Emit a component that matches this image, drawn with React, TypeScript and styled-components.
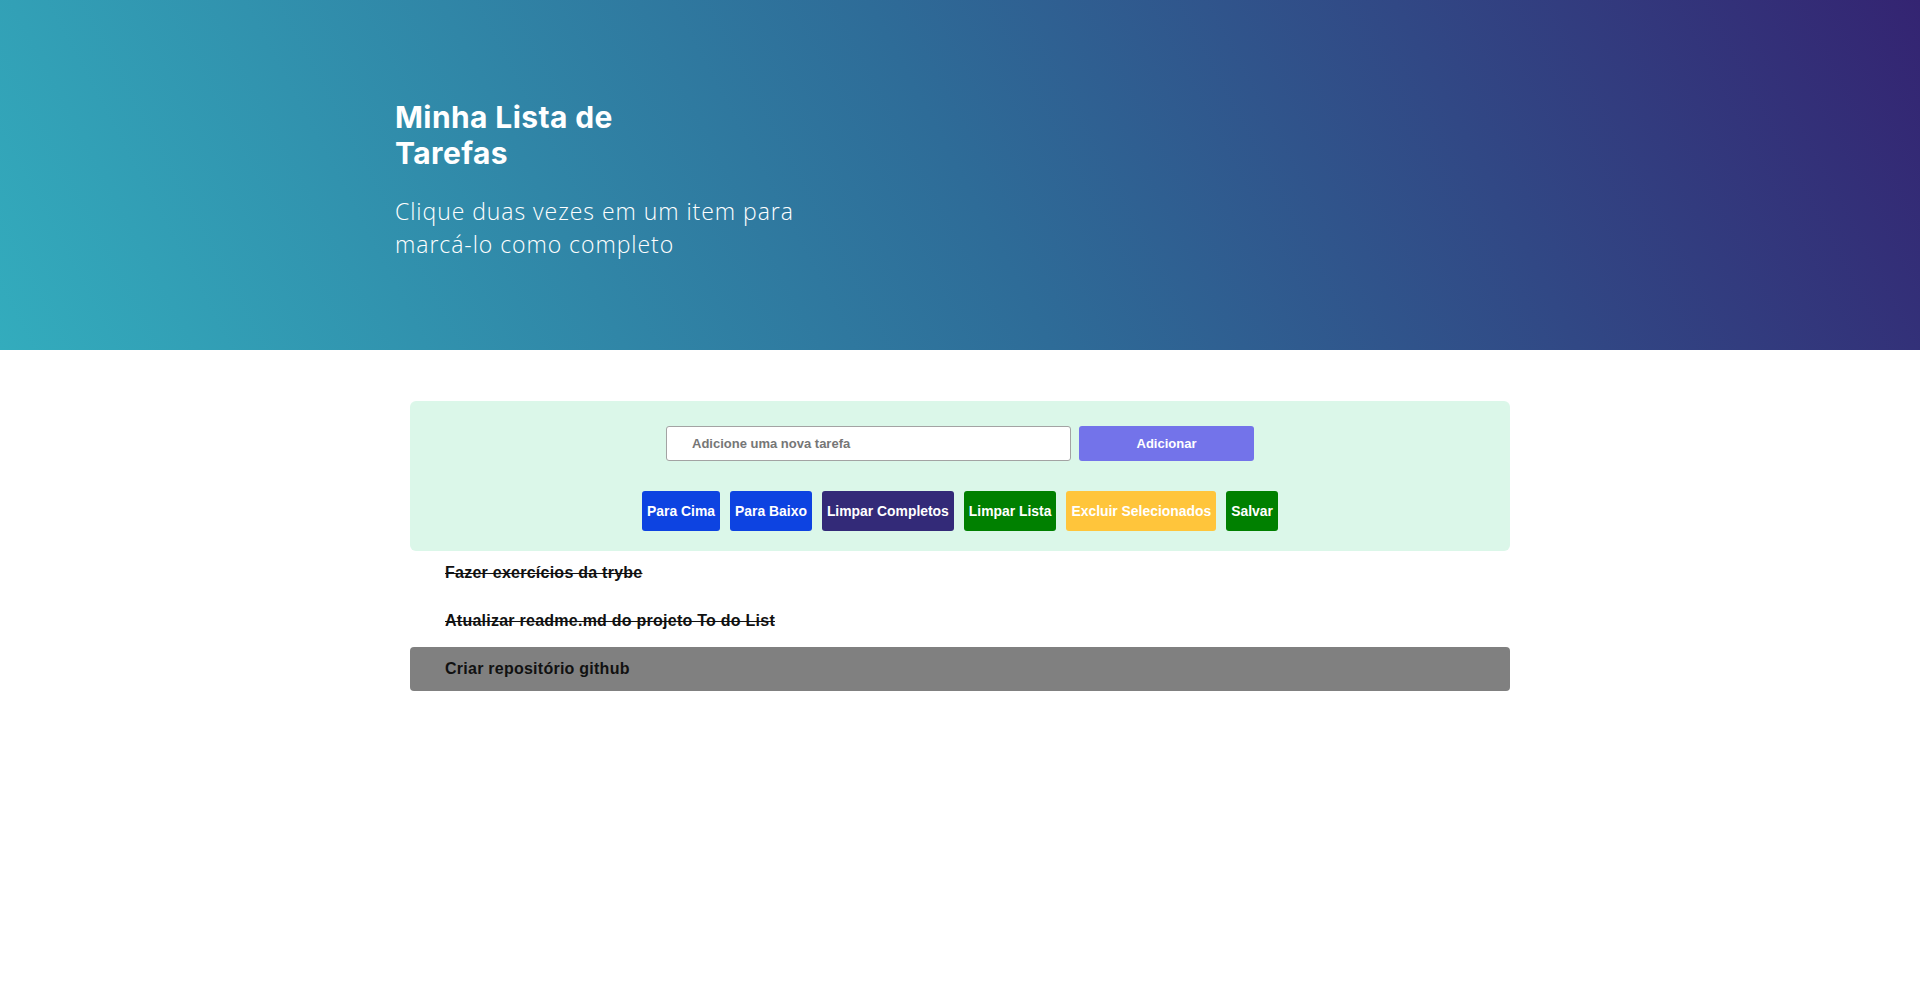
import React from "react";
import styled, { createGlobalStyle } from "styled-components";

const GlobalStyle = createGlobalStyle`
  html, body {
    margin: 0;
    padding: 0;
    background: #ffffff;
  }
  * { box-sizing: border-box; }
`;

const Page = styled.div`
  min-height: 994px;
  background: #fff;
  font-family: Inter, "Liberation Sans", sans-serif;
`;

const Header = styled.header`
  height: 350px;
  background: linear-gradient(62deg, #33acbd 0%, #2e6c98 50%, #342472 100%);
  padding-top: 99px;
`;

const HeaderInner = styled.div`
  width: 1130px;
  margin: 0 auto;
`;

const Title = styled.h1`
  margin: 0;
  width: 260px;
  color: #ffffff;
  font-family: Inter, "Liberation Sans", sans-serif;
  font-weight: 700;
  font-size: 30px;
  letter-spacing: 0.4px;
  line-height: 36px;
`;

const Subtitle = styled.p`
  margin: 24px 0 0;
  width: 440px;
  color: #ffffff;
  font-family: "Open Sans", "Liberation Sans", sans-serif;
  font-weight: 300;
  font-size: 23px;
  letter-spacing: 0.95px;
  line-height: 33px;
`;

const Main = styled.main`
  width: 1100px;
  margin: 51px auto 0;
`;

const Panel = styled.section`
  background: #dbf7e9;
  border-radius: 6px;
  height: 150px;
  padding-top: 25px;
  display: flex;
  flex-direction: column;
  align-items: center;
  gap: 30px;
`;

const InputRow = styled.div`
  display: flex;
  gap: 8px;
`;

const TaskInput = styled.input`
  width: 405px;
  height: 35px;
  border: 1px solid #a3a3a3;
  border-radius: 3px;
  padding: 0 0 0 25px;
  background: #fff;
  font-family: "Liberation Sans", Arial, sans-serif;
  font-weight: 700;
  font-size: 13px;
  color: #333;
  outline: none;
  &::placeholder {
    color: #767676;
  }
`;

const AddButton = styled.button`
  width: 175px;
  height: 35px;
  border: none;
  border-radius: 3px;
  background: #7373ea;
  color: #ffffff;
  font-family: "Liberation Sans", Arial, sans-serif;
  font-weight: 700;
  font-size: 13px;
  cursor: pointer;
`;

const ButtonRow = styled.div`
  display: flex;
  gap: 10px;
`;

const ActionButton = styled.button<{ $bg: string }>`
  height: 40px;
  padding: 0 5px;
  border: none;
  border-radius: 3px;
  background: ${(p) => p.$bg};
  color: #ffffff;
  font-family: "Liberation Sans", Arial, sans-serif;
  font-weight: 700;
  font-size: 13.9px;
  cursor: pointer;
`;

const TaskList = styled.ol`
  list-style: none;
  margin: 0;
  padding: 0;
  display: flex;
  flex-direction: column;
  gap: 4px;
`;

const TaskItem = styled.li<{ $done?: boolean; $selected?: boolean }>`
  height: 44px;
  display: flex;
  align-items: center;
  padding-left: 35px;
  border-radius: 4px;
  background: ${(p) => (p.$selected ? "#808080" : "transparent")};
  color: #111111;
  font-family: "Liberation Sans", Arial, sans-serif;
  font-weight: 700;
  font-size: 16px;
  letter-spacing: 0.25px;
  text-decoration: ${(p) => (p.$done ? "line-through" : "none")};
`;

const actions = [
  { label: "Para Cima", bg: "#0d43e1" },
  { label: "Para Baixo", bg: "#0d43e1" },
  { label: "Limpar Completos", bg: "#332a78" },
  { label: "Limpar Lista", bg: "#008000" },
  { label: "Excluir Selecionados", bg: "#ffc53b" },
  { label: "Salvar", bg: "#008000" },
];

const tasks = [
  { text: "Fazer exercícios da trybe", done: true, selected: false },
  { text: "Atualizar readme.md do projeto To do List", done: true, selected: false },
  { text: "Criar repositório github", done: false, selected: true },
];

export default function App() {
  return (
    <Page>
      <GlobalStyle />
      <Header>
        <HeaderInner>
          <Title>Minha Lista de Tarefas</Title>
          <Subtitle>Clique duas vezes em um item para marcá-lo como completo</Subtitle>
        </HeaderInner>
      </Header>
      <Main>
        <Panel>
          <InputRow>
            <TaskInput placeholder="Adicione uma nova tarefa" />
            <AddButton>Adicionar</AddButton>
          </InputRow>
          <ButtonRow>
            {actions.map((a) => (
              <ActionButton key={a.label} $bg={a.bg}>
                {a.label}
              </ActionButton>
            ))}
          </ButtonRow>
        </Panel>
        <TaskList>
          {tasks.map((t) => (
            <TaskItem key={t.text} $done={t.done} $selected={t.selected}>
              {t.text}
            </TaskItem>
          ))}
        </TaskList>
      </Main>
    </Page>
  );
}
